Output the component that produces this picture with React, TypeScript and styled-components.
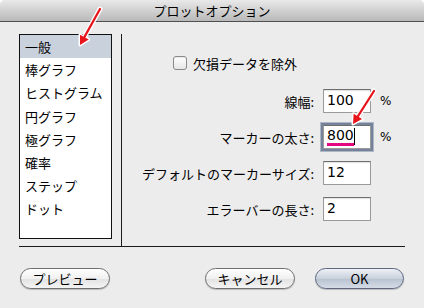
import React from "react";
import styled, { createGlobalStyle } from "styled-components";

const GlobalStyle = createGlobalStyle`
  html, body {
    margin: 0;
    padding: 0;
    background: #ffffff;
  }
  body {
    font-family: "Noto Sans CJK JP", "DejaVu Sans", sans-serif;
    font-size: 13px;
    color: #000;
  }
`;

const Window = styled.div`
  position: relative;
  width: 424px;
  height: 308px;
  background: #ececec;
  border-radius: 5px 5px 0 0;
  overflow: hidden;
  display: flex;
  flex-direction: column;
`;

const TitleBar = styled.div`
  height: 21px;
  flex: none;
  background: linear-gradient(#e9e9e9, #b9b9b9);
  border-bottom: 1px solid #4f4f4f;
  display: flex;
  align-items: center;
  justify-content: center;
  font-size: 13px;
  line-height: 21px;
`;

const Main = styled.div`
  margin: 12px 19px 0 19px;
  height: 212px;
  border-bottom: 1px solid #1a1a1a;
  display: flex;
`;

const LeftPane = styled.div`
  width: 102px;
  flex: none;
  border-right: 1px solid #1a1a1a;
`;

const List = styled.ul`
  list-style: none;
  margin: 0;
  padding: 0;
  width: 91px;
  height: 203px;
  background: #fff;
  border: 1px solid #111;
`;

const Item = styled.li<{ $selected?: boolean }>`
  height: 23.2px;
  line-height: 23px;
  padding-left: 5px;
  background: ${(p) => (p.$selected ? "#c9d1dd" : "transparent")};
`;

const RightPane = styled.div`
  flex: 1;
  display: flex;
  flex-direction: column;
  padding-top: 22px;
`;

const CheckRow = styled.label`
  display: flex;
  align-items: center;
  gap: 6px;
  margin-left: 51px;
  height: 14px;
`;

const CheckBox = styled.span`
  width: 12px;
  height: 12px;
  border: 1px solid #8a8a8a;
  border-radius: 3px;
  background: linear-gradient(#ffffff, #e6e6e6);
  box-shadow: inset 0 1px 1px rgba(0, 0, 0, 0.08);
`;

const Fields = styled.div`
  margin-top: 19px;
  display: grid;
  grid-template-columns: 1fr 48px 34px;
  row-gap: 12px;
  align-items: center;
`;

const Label = styled.span`
  text-align: right;
  padding-right: 9px;
`;

const Field = styled.div<{ $focused?: boolean }>`
  height: 24px;
  box-sizing: border-box;
  background: #fff;
  border: 1px solid #9a9a9a;
  border-top-color: #6e6e6e;
  box-shadow: ${(p) =>
    p.$focused
      ? "0 0 0 2px #76829a, 0 0 0 3px #aeb7c6"
      : "inset 0 1px 1px rgba(0,0,0,0.12)"};
  font-family: "DejaVu Sans", sans-serif;
  font-size: 14px;
  line-height: 20px;
  padding-left: 3px;
  padding-bottom: 2px;
  display: flex;
  align-items: center;
`;

const Composing = styled.span`
  border-bottom: 3px solid #e2077f;
  line-height: 16px;
`;

const Caret = styled.span`
  width: 1px;
  height: 17px;
  background: #000;
`;

const Unit = styled.span`
  padding-left: 9px;
  font-family: "DejaVu Sans", sans-serif;
  font-size: 12px;
`;

const ButtonRow = styled.div`
  display: flex;
  align-items: center;
  margin: 21px 20px 0 20px;
`;

const Button = styled.button<{ $default?: boolean; $width: number }>`
  width: ${(p) => p.$width}px;
  height: 21px;
  border-radius: 11px;
  border: 1px solid ${(p) => (p.$default ? "#5d6880" : "#6f6f6f")};
  background: ${(p) =>
    p.$default
      ? "linear-gradient(#eef1f6, #c9d1dc 50%, #b7c1cf 51%, #d5dce6)"
      : "linear-gradient(#ffffff, #f0f0f0 50%, #e2e2e2 51%, #f4f4f4)"};
  box-shadow: 0 1px 1px rgba(0, 0, 0, 0.2);
  font-family: "Noto Sans CJK JP", "DejaVu Sans", sans-serif;
  font-size: 13px;
  color: #000;
  padding: 0;
  line-height: 19px;
`;

const Spacer = styled.div`
  flex: 1;
`;

const Overlay = styled.svg`
  position: absolute;
  left: 0;
  top: 0;
  pointer-events: none;
`;

const items = ["一般", "棒グラフ", "ヒストグラム", "円グラフ", "極グラフ", "確率", "ステップ", "ドット"];

const Arrow = ({ x1, y1, x2, y2 }: { x1: number; y1: number; x2: number; y2: number }) => {
  const a = Math.atan2(y2 - y1, x2 - x1);
  const len = 9;
  const w = 5;
  const bx = x2 - Math.cos(a) * len;
  const by = y2 - Math.sin(a) * len;
  const px = -Math.sin(a) * w;
  const py = Math.cos(a) * w;
  const head = `${x2},${y2} ${bx + px},${by + py} ${bx - px},${by - py}`;
  return (
    <g>
      <line x1={x1} y1={y1} x2={bx} y2={by} stroke="#fff" strokeWidth={5} strokeLinecap="round" />
      <polygon points={head} fill="#fff" stroke="#fff" strokeWidth={3} strokeLinejoin="round" />
      <line x1={x1} y1={y1} x2={bx} y2={by} stroke="#e8141c" strokeWidth={2.2} strokeLinecap="round" />
      <polygon points={head} fill="#e8141c" />
    </g>
  );
};

export default function App() {
  return (
    <Window>
      <GlobalStyle />
      <TitleBar>プロットオプション</TitleBar>
      <Main>
        <LeftPane>
          <List>
            {items.map((t, i) => (
              <Item key={t} $selected={i === 0}>
                {t}
              </Item>
            ))}
          </List>
        </LeftPane>
        <RightPane>
          <CheckRow>
            <CheckBox />
            欠損データを除外
          </CheckRow>
          <Fields>
            <Label>線幅:</Label>
            <Field>100</Field>
            <Unit>%</Unit>
            <Label>マーカーの太さ:</Label>
            <Field $focused>
              <Composing>800</Composing>
              <Caret />
            </Field>
            <Unit>%</Unit>
            <Label>デフォルトのマーカーサイズ:</Label>
            <Field>12</Field>
            <span />
            <Label>エラーバーの長さ:</Label>
            <Field>2</Field>
            <span />
          </Fields>
        </RightPane>
      </Main>
      <ButtonRow>
        <Button $width={90}>プレビュー</Button>
        <Spacer />
        <Button $width={90}>キャンセル</Button>
        <Button $width={89} $default style={{ marginLeft: 20 }}>
          OK
        </Button>
      </ButtonRow>
      <Overlay width={424} height={308}>
        <Arrow x1={100} y1={9} x2={80} y2={45} />
        <Arrow x1={374} y1={91} x2={353} y2={124} />
      </Overlay>
    </Window>
  );
}
